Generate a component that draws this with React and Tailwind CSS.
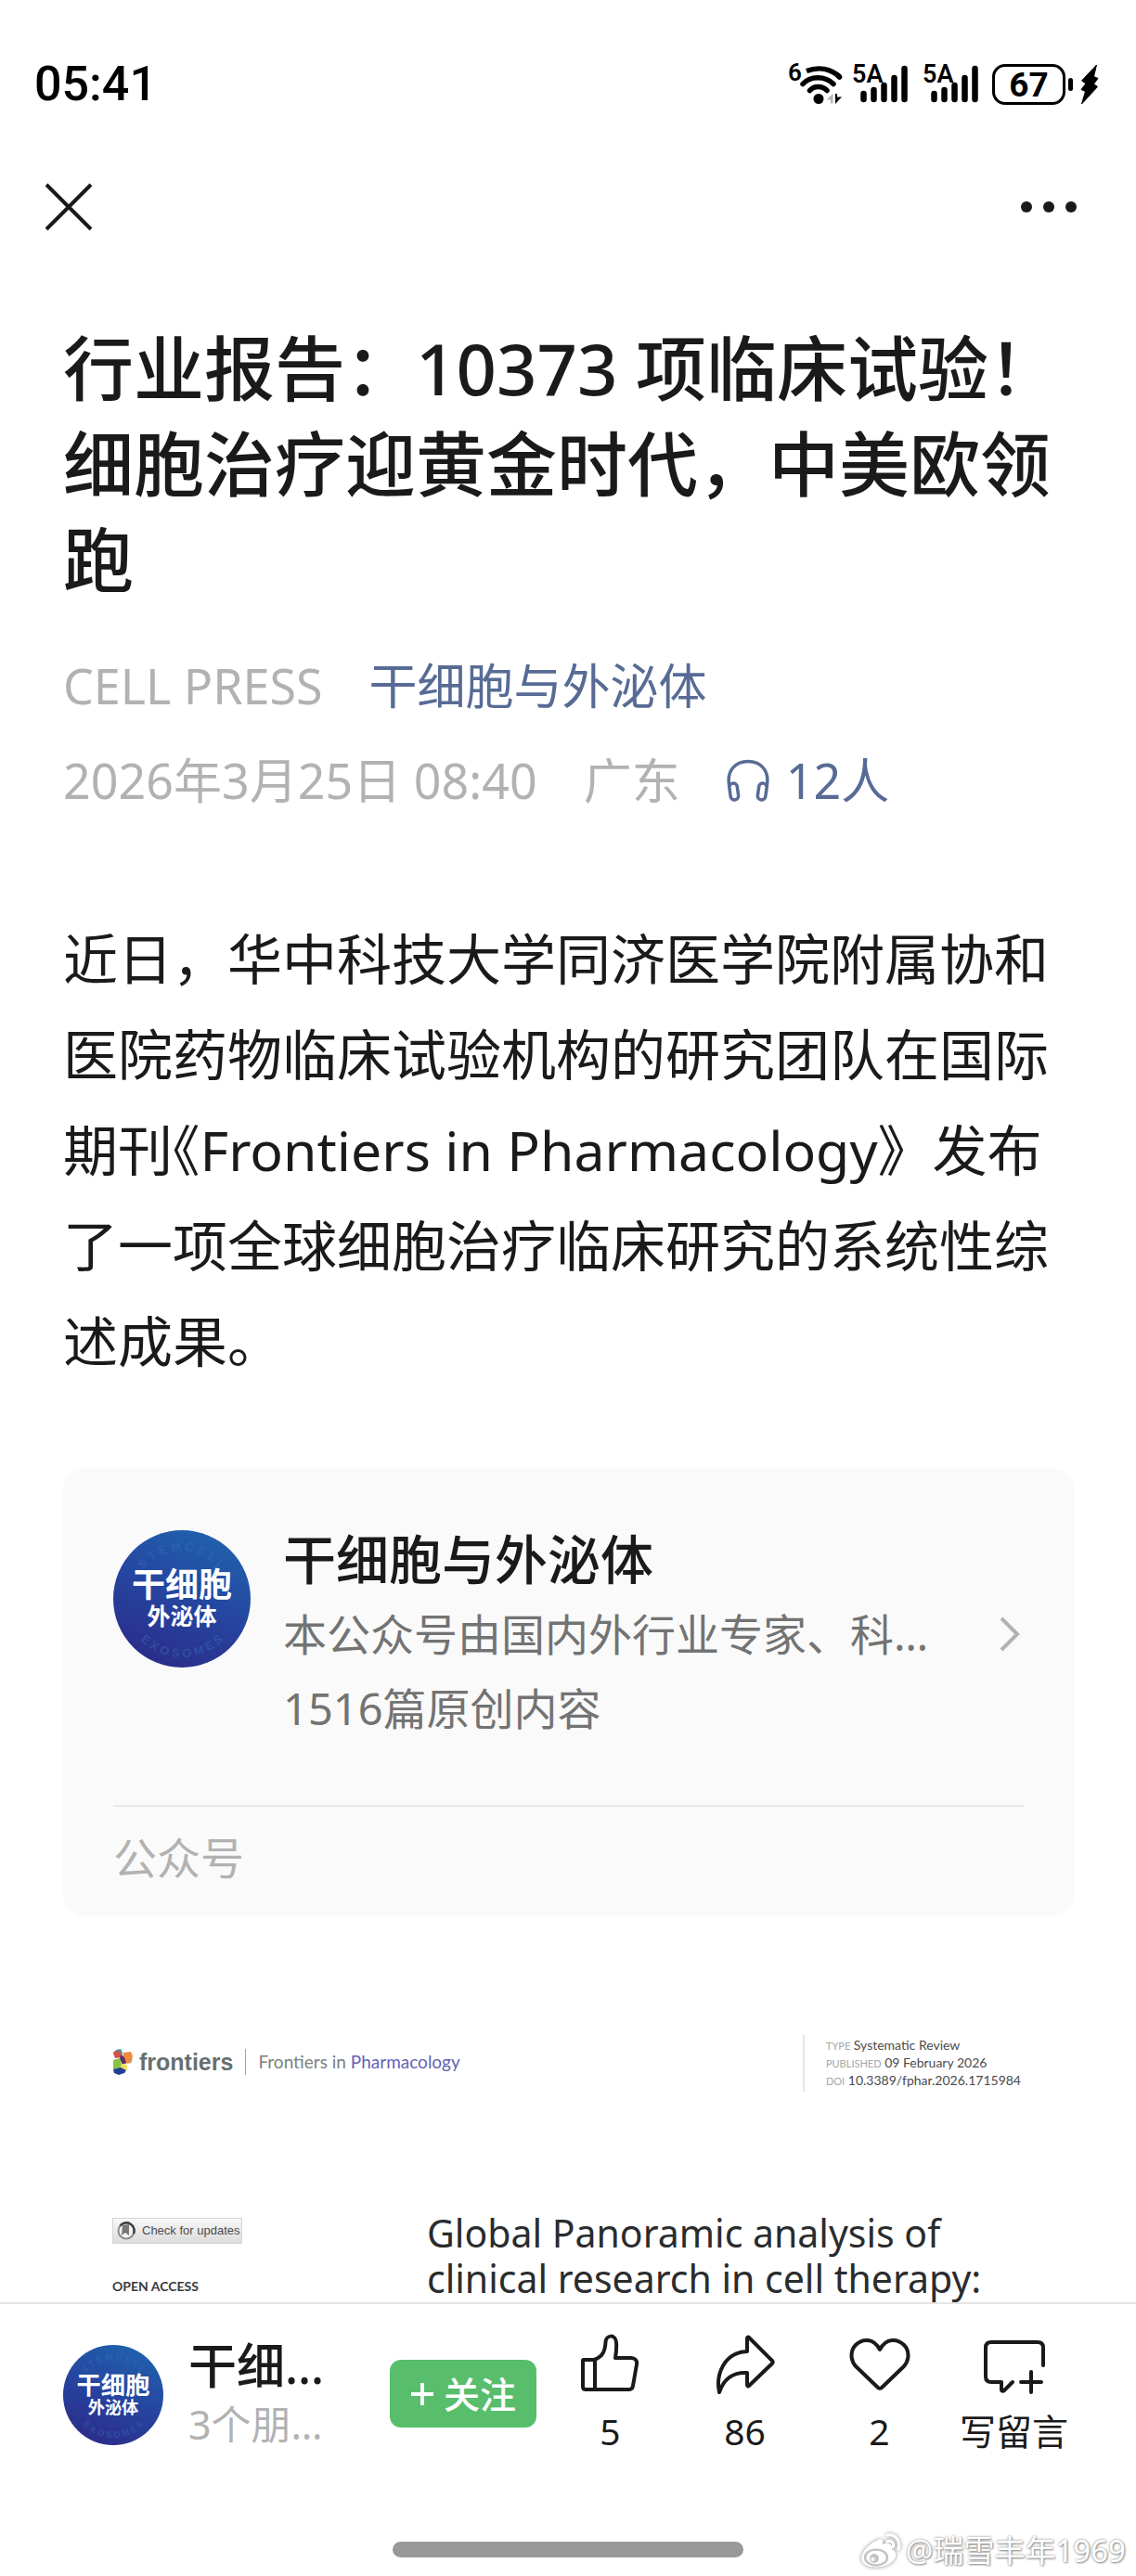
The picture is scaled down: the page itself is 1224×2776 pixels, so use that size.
import React from "react";

const SignalBars = () => {
  return (
    <svg
      viewBox="0 0 60 44"
      className="w-[60px] h-[44px] overflow-visible"
      aria-label="5A signal"
    >
      <text
        x="-1"
        y="20"
        fontSize="27"
        fontWeight="600"
        fontFamily="Roboto, sans-serif"
      >
        5A
      </text>
      <g stroke="#000" strokeWidth="6.5" strokeLinecap="round">
        <path d="M11.5 32v6M22.5 28v10M33.5 23v15M44.5 15v23M55.5 5v33" />
      </g>
    </svg>
  );
};

const StatusBar = () => {
  return (
    <div className="flex items-center justify-between pl-[37px] pr-[40px] pt-[61px] text-black">
      <span className="font-[Roboto] text-[52px] leading-[60px] font-medium">
        05:41
      </span>
      <div className="flex items-center">
        <svg
          viewBox="0 0 60 44"
          className="w-[60px] h-[44px] mr-[8px] overflow-visible"
          aria-label="WiFi 6"
        >
          <text
            x="-2"
            y="18"
            fontSize="26"
            fontWeight="600"
            fontFamily="Roboto, sans-serif"
          >
            6
          </text>
          <g fill="none" stroke="#000" strokeWidth="5.5" strokeLinecap="round">
            <path d="M18 7.500C31 2.500 44 5 54 14" strokeLinecap="butt" />
            <path d="M52.500 13L53.500 14" />
            <path d="M14 21.500C22 12.500 38 12.500 47 21.500" />
            <path d="M21.500 28.500C26 23 35 23 40 28.500" />
          </g>
          <circle cx="31" cy="37.500" r="5.500" />
          <path d="M39.500 38.500L46.500 32V42.500H44V38.500z" fill="#b5b5b5" />
          <path d="M49 32h2v3.500h5L49 43z" />
        </svg>
        <SignalBars />
        <div className="w-[16px]" />
        <SignalBars />
        <div className="flex items-center ml-[14px]">
          <span className="flex items-center justify-center w-[79px] h-[44px] rounded-[14px] border-[3px] border-black font-[Roboto] text-[37px] leading-none font-bold">
            67
          </span>
          <span className="ml-[3px] w-[5px] h-[14px] rounded-full bg-black" />
          <svg viewBox="0 0 20 44" className="w-[20px] h-[44px] ml-[8px]">
            <path
              d="M17.500 1L1.500 18L6 21L1 27.500L5.500 29.500L1.500 43L18.500 24.500L14.500 21.500L19 15.500L14.500 13.500z"
              stroke="#000"
              strokeWidth="1"
              strokeLinejoin="round"
            />
          </svg>
        </div>
      </div>
    </div>
  );
};

const NavBar = () => {
  return (
    <nav className="flex items-center justify-between px-[48px] pt-[69px]">
      <button aria-label="关闭" className="h-[65px] flex items-center">
        <svg
          viewBox="0 0 52 52"
          className="w-[52px] h-[52px]"
          stroke="#1a1a1a"
          strokeWidth="4"
        >
          <path d="M2 2L50 50M50 2L2 50" />
        </svg>
      </button>
      <button aria-label="更多" className="h-[65px] flex items-center gap-[12px] pr-[16px]">
        <i className="size-[12px] rounded-full bg-[#1a1a1a]" />
        <i className="size-[12px] rounded-full bg-[#1a1a1a]" />
        <i className="size-[12px] rounded-full bg-[#1a1a1a]" />
      </button>
    </nav>
  );
};

// round account logo, shared by the card and the bottom bar
const Avatar = ({ id, className }) => {
  return (
    <svg viewBox="0 0 148 148" className={className} role="img">
      <defs>
        <linearGradient id={`${id}-bg`} x1="0.75" y1="0.05" x2="0.35" y2="0.95">
          <stop offset="0" stopColor="#2060ac" />
          <stop offset="0.5" stopColor="#2546a0" />
          <stop offset="1" stopColor="#2b2f8c" />
        </linearGradient>
        <path id={`${id}-top`} d="M22 74A52 52 0 0 1 126 74" />
        <path id={`${id}-bottom`} d="M11 74A63 63 0 0 0 137 74" />
      </defs>
      <circle cx="74" cy="74" r="74" fill={`url(#${id}-bg)`} />
      <g
        fill="#3a74bc"
        fillOpacity="0.4"
        fontFamily="Liberation Sans, sans-serif"
        fontSize="13"
        fontWeight="700"
        textAnchor="middle"
      >
        <text>
          <textPath href={`#${id}-top`} startOffset="50%">
            S T E M C E L L
          </textPath>
        </text>
        <text>
          <textPath href={`#${id}-bottom`} startOffset="50%">
            E X O S O M E S
          </textPath>
        </text>
      </g>
      <g
        fill="#fff"
        textAnchor="middle"
        fontFamily="Noto Sans CJK SC, sans-serif"
        fontWeight="700"
      >
        <text x="74" y="72" fontSize="36">
          干细胞
        </text>
        <text x="74" y="102" fontSize="25">
          外泌体
        </text>
      </g>
    </svg>
  );
};

const AccountCard = () => {
  return (
    <section className="mt-[85px] rounded-[24px] bg-[#fafafa] px-[54px]">
      <a href="#account" className="flex items-start pt-[59px] pb-[64px]">
        <Avatar id="card" className="mt-[8px] w-[148px] h-[148px] shrink-0" />
        <div className="ml-[35px] flex-1 min-w-0">
          <h2 className="text-[57px] leading-[78px] font-medium">
            干细胞与外泌体
          </h2>
          <div className="mt-[2px] flex items-center text-[47px] leading-[80px] text-[#737373]">
            <p className="flex-1">本公众号由国内外行业专家、科…</p>
            <svg
              viewBox="0 0 24 40"
              className="w-[24px] h-[40px] mr-[4px]"
              fill="none"
              stroke="#b2b2b2"
              strokeWidth="4"
            >
              <path d="M3 3L20 20L3 37" />
            </svg>
          </div>
          <p className="text-[47px] leading-[80px] text-[#737373]">
            1516篇原创内容
          </p>
        </div>
      </a>
      <p className="border-t-2 border-[#e8e8e8] pt-[19px] pb-[27px] text-[47px] leading-[72px] text-[#b2b2b2]">
        公众号
      </p>
    </section>
  );
};

const FrontiersLogo = () => {
  return (
    <svg viewBox="0 0 22 28" className="w-[22px] h-[28px]">
      <path d="M4 1L9 0L11 4L10 9L3 9L1 5z" fill="#3f9c8c" />
      <path d="M1 3L8 2L10 9L3 10z" fill="#d8504a" />
      <path d="M12 4L20 3L22 8L20 15L14 16L11 10z" fill="#ee8a3c" />
      <path d="M20 15L22 9L21 14L17 17z" fill="#45b4d8" />
      <path d="M9 6L13 9L15 15L11 17L8 11z" fill="#5d2e66" />
      <path d="M1 12L8 10L10 17L9 21L1 22z" fill="#86c440" />
      <path d="M10 16L16 17L16 23L9 22z" fill="#f1dd5e" />
      <path d="M1 22L9 20L15 23L13 26L7 28L2 26z" fill="#1f3f94" />
    </svg>
  );
};

const paperInfo = [
  { label: "TYPE", value: "Systematic Review" },
  { label: "PUBLISHED", value: "09 February 2026" },
  { label: "DOI", value: "10.3389/fphar.2026.1715984" },
];

const PaperPreview = () => {
  return (
    <figure className="mt-[128px] pl-[53px] pr-[58px] font-[Lato]">
      <div className="flex items-start justify-between">
        <div className="flex items-center mt-[15px] h-[28px] text-[19px] text-[#7b7f82]">
          <FrontiersLogo />
          <span className="ml-[7px] font-['Liberation_Sans'] text-[25px] leading-none font-bold text-[#65706f]">
            frontiers
          </span>
          <span className="mx-[13px] w-px h-[28px] bg-[#a0a4a6]" />
          <span>
            Frontiers in <span className="text-[#6461b5]">Pharmacology</span>
          </span>
        </div>
        <ul className="border-l-2 border-[#e4e4e4] pl-[23px] py-[2px] text-[14px] leading-[18px] text-[#4b4b4d]">
          {paperInfo.map(({ label, value }) => (
            <li key={label}>
              <span className="text-[11px] text-[#a5a7a9]">{label}</span> {value}
            </li>
          ))}
        </ul>
      </div>
      <div className="mt-[128px] flex items-start">
        <div className="w-[339px] shrink-0 pt-[8px]">
          <div className="flex items-center w-[140px] h-[28px] border border-[#d4d4d4] bg-linear-to-b from-[#f8f8f8] to-[#dcdcdc] pl-[4px] font-['Liberation_Sans'] text-[13px] whitespace-nowrap text-[#4c4c4c]">
            <svg viewBox="0 0 20 20" className="w-[20px] h-[20px] mr-[7px]">
              <circle cx="10" cy="10" r="8.500" fill="#f2f2f2" stroke="#8c8c8c" strokeWidth="2" />
              <path d="M3.500 4.500A8.500 8.500 0 0 1 18 13" fill="none" stroke="#3f3f3f" strokeWidth="2.500" />
              <path d="M6 4L13 3V15L9 12L5 15z" fill="#77777a" />
            </svg>
            Check for updates
          </div>
          <p className="mt-[36px] text-[14px] leading-[20px] font-bold text-[#3a3a3c]">
            OPEN ACCESS
          </p>
        </div>
        <h3 className="font-['Noto_Sans'] text-[41px] leading-[49px] whitespace-nowrap text-[#2a2c2e]">
          Global Panoramic analysis of
          <br />
          clinical research in cell therapy:
        </h3>
      </div>
    </figure>
  );
};

const actions = [
  {
    label: "5",
    icon: (
      <path d="M3 28H14C23 25 26 19 26.500 9C27 1 37 0 38 9C38.500 15 38 20 37 26H54C58 26 61 29 60 33L56 56C55.500 59 54 60 52 60H5C3 60 2 59 2 57V29C2 28.500 2.500 28 3 28zM15 28V60" />
    ),
  },
  {
    label: "86",
    icon: (
      <path d="M34 5C34 4 35 3 36 4L61 29C62 30 62 31 61 32L36 56C35 57 34 56 34 55V42C20 41 9 48 4 63C0 44 9 20 34 19z" />
    ),
  },
  {
    label: "2",
    icon: (
      <path d="M32 17C25 4 13 5 6 12C0 18 0 28 6 35L30 58C31 59 33 59 34 58L58 35C64 28 64 18 58 12C51 5 39 4 32 17z" />
    ),
  },
  {
    label: "写留言",
    icon: (
      <path d="M63 34V15C63 11 61 9 57 9H7C3 9 1 11 1 15V46C1 50 3 52 7 52H18V60C18 62 20 62 21 61L30 52M50 41V63M39 52H61" />
    ),
  },
];

const Weibo = () => {
  return (
    <svg
      viewBox="0 0 46 40"
      className="w-[46px] h-[40px] [filter:drop-shadow(0_0_2px_#888)]"
      fill="#fff"
    >
      <path d="M20 8C24 6 26 8 25 13C31 10 36 12 35 18C40 20 41 26 36 31C28 39 10 40 4 33C-2 26 8 13 20 8z" />
      <ellipse cx="18" cy="27" rx="12" ry="8.500" fill="#fff" stroke="#c4c4c4" strokeWidth="2.500" />
      <circle cx="16" cy="28" r="5" fill="#c4c4c4" />
      <circle cx="14.500" cy="29" r="2" />
      <path
        d="M30 3C38 1 45 9 42 18M30 10C34 8 38 12 36 16"
        fill="none"
        stroke="#fff"
        strokeWidth="3"
        strokeLinecap="round"
      />
    </svg>
  );
};

const BottomBar = () => {
  return (
    <footer className="relative shrink-0 border-t-2 border-[#e5e5e5] bg-white">
      <div className="flex items-start pl-[68px] pr-[59px]">
        <a href="#account" className="flex mt-[32px]">
          <Avatar id="bar" className="mt-[12px] w-[108px] h-[108px]" />
          <div className="ml-[27px] whitespace-nowrap">
            <p className="text-[52px] leading-[68px] font-medium">干细…</p>
            <p className="text-[43px] leading-[60px] text-[#b2b2b2]">3个朋…</p>
          </div>
        </a>
        <button className="mt-[60px] ml-auto mr-[7px] w-[158px] h-[73px] flex items-center justify-center gap-[10px] rounded-[12px] bg-[#58be6b] text-[39px] leading-[60px] font-medium text-white">
          <svg
            viewBox="0 0 26 26"
            className="w-[26px] h-[26px]"
            stroke="#fff"
            strokeWidth="4"
          >
            <path d="M13 1V25M1 13H25" />
          </svg>
          关注
        </button>
        {actions.map(({ label, icon }) => (
          <button
            key={label}
            className="mt-[30px] w-[145px] flex flex-col items-center text-[39px] leading-[60px]"
          >
            <svg
              viewBox="-2 -2 68 68"
              className="w-[68px] h-[68px] mb-[9px]"
              fill="none"
              stroke="#1a1a1a"
              strokeWidth="4"
              strokeLinecap="round"
              strokeLinejoin="round"
            >
              {icon}
            </svg>
            {label}
          </button>
        ))}
      </div>
      <div className="mx-auto mt-[89px] mb-[20px] w-[378px] h-[17px] rounded-full bg-[#999]" />
      <div className="absolute right-[11px] bottom-0 flex items-center gap-[4px] text-[33px] leading-[54px] text-white [text-shadow:0_0_3px_#888,1px_1px_2px_#999]">
        <Weibo />
        @瑞雪丰年1969
      </div>
    </footer>
  );
};

const App = () => {
  return (
    <div
      lang="zh-CN"
      className="h-screen flex flex-col overflow-hidden bg-white text-[#1a1a1a] font-['Noto_Sans','Noto_Sans_CJK_SC',sans-serif]"
    >
      <StatusBar />
      <NavBar />

      <main className="flex-1 min-h-0 overflow-hidden pl-[68px] pr-[66px] pt-[90px]">
        <h1 className="text-[76px] leading-[103px] font-medium">
          行业报告：10373 项临床试验！细胞治疗迎黄金时代，中美欧领跑
        </h1>

        <div className="mt-[34px] text-[52px] leading-[102px] text-[#b2b2b2]">
          <div className="flex gap-[50px]">
            <span>CELL PRESS</span>
            <a href="#account" className="text-[#576b95]">
              干细胞与外泌体
            </a>
          </div>
          <div className="flex items-center gap-[50px]">
            <span>2026年3月25日 08:40</span>
            <span>广东</span>
            <button className="flex items-center gap-[18px] text-[#576b95]">
              <svg
                viewBox="0 0 46 46"
                className="w-[46px] h-[46px]"
                fill="none"
                stroke="#576b95"
                strokeWidth="3.500"
              >
                <path d="M3 30C-1 12 10 2.500 23 2.500C36 2.500 47 12 43 30" />
                <rect x="3.500" y="26" width="8.500" height="18" rx="4.250" transform="rotate(-8 8 35)" />
                <rect x="34" y="26" width="8.500" height="18" rx="4.250" transform="rotate(8 38 35)" />
              </svg>
              12人
            </button>
          </div>
        </div>

        <p className="mt-[90px] text-[59px] leading-[103px]">
          近日，华中科技大学同济医学院附属协和医院药物临床试验机构的研究团队在国际期刊
          <span className="[font-feature-settings:'halt']">《</span>
          Frontiers in Pharmacology》发布了一项全球细胞治疗临床研究的系统性综述成果。
        </p>

        <AccountCard />
        <PaperPreview />
      </main>

      <BottomBar />
    </div>
  );
};

export default App;
